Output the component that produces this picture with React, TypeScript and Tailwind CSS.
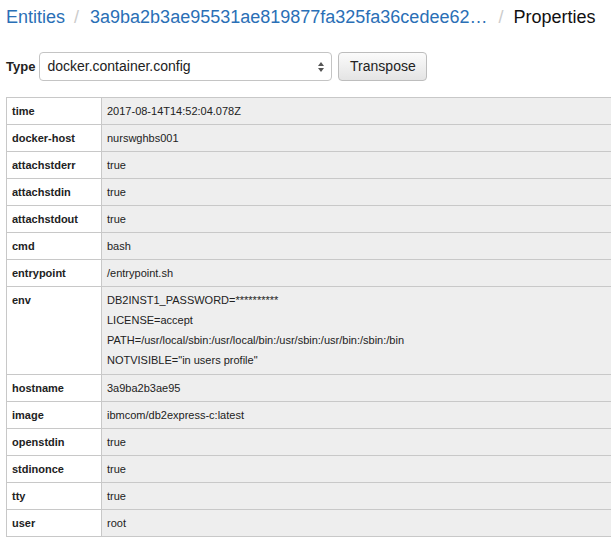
const rows: { key: string; values: string[] }[] = [
  { key: "time", values: ["2017-08-14T14:52:04.078Z"] },
  { key: "docker-host", values: ["nurswghbs001"] },
  { key: "attachstderr", values: ["true"] },
  { key: "attachstdin", values: ["true"] },
  { key: "attachstdout", values: ["true"] },
  { key: "cmd", values: ["bash"] },
  { key: "entrypoint", values: ["/entrypoint.sh"] },
  {
    key: "env",
    values: [
      "DB2INST1_PASSWORD=**********",
      "LICENSE=accept",
      "PATH=/usr/local/sbin:/usr/local/bin:/usr/sbin:/usr/bin:/sbin:/bin",
      'NOTVISIBLE="in users profile"',
    ],
  },
  { key: "hostname", values: ["3a9ba2b3ae95"] },
  { key: "image", values: ["ibmcom/db2express-c:latest"] },
  { key: "openstdin", values: ["true"] },
  { key: "stdinonce", values: ["true"] },
  { key: "tty", values: ["true"] },
  { key: "user", values: ["root"] },
];

const App = () => {
  return (
    <div className="min-h-screen w-[611px] overflow-hidden bg-white font-['Liberation_Sans',Arial,sans-serif] text-[#333]">
      {/* Breadcrumb */}
      <div className="flex items-center whitespace-nowrap pl-[6px] pt-[5px] text-[18px] leading-[25px]">
        <a href="#" className="text-[#2a6fb6]">
          Entities
        </a>
        <span className="pl-[9px] pr-[11px] text-[#ccc]">/</span>
        <a href="#" className="text-[#2a6fb6]">
          3a9ba2b3ae95531ae819877fa325fa36cedee62…
        </a>
        <span className="pl-[11px] pr-[10px] text-[#ccc]">/</span>
        <span className="text-[#111]">Properties</span>
      </div>

      {/* Type selector */}
      <div className="mt-[22px] flex items-center pl-[6px]">
        <label className="mr-[4px] text-[13px] font-bold text-[#222]">Type</label>
        <div className="relative flex h-[29px] w-[293px] items-center rounded-[4px] border border-[#c4c4c4] bg-white pl-[7px] text-[14px] text-[#222]">
          docker.container.config
          <svg
            className="absolute right-[6px] top-[8px]"
            width="8"
            height="12"
            viewBox="0 0 8 12"
          >
            <path d="M4 1 L7 5 L1 5 Z" fill="#555" />
            <path d="M4 11 L7 7 L1 7 Z" fill="#555" />
          </svg>
        </div>
        <button className="ml-[6px] h-[29px] w-[89px] rounded-[4px] border border-[#bdbdbd] bg-gradient-to-b from-[#fbfbfb] to-[#e4e4e4] text-[14px] text-[#222]">
          Transpose
        </button>
      </div>

      {/* Properties table */}
      <div className="mt-[16px] pl-[6px]">
        <table className="w-[640px] border-collapse text-[11px] text-[#222]">
          <tbody>
            {rows.map((row) => (
              <tr key={row.key}>
                <td className="w-[95px] border border-[#c8c8c8] bg-white px-[5px] align-top font-bold leading-[26px]">
                  {row.values.length === 1 ? (
                    row.key
                  ) : (
                    <div className="pt-[1px] leading-[24px]">{row.key}</div>
                  )}
                </td>
                <td className="border border-[#c8c8c8] bg-[#eeeeee] px-[5px] align-top leading-[26px]">
                  {row.values.length === 1 ? (
                    row.values[0]
                  ) : (
                    <div className="pt-[3px] pb-[4px]">
                      {row.values.map((v) => (
                        <div key={v} className="leading-[20px]">
                          {v}
                        </div>
                      ))}
                    </div>
                  )}
                </td>
              </tr>
            ))}
          </tbody>
        </table>
      </div>
    </div>
  );
};

export default App;
